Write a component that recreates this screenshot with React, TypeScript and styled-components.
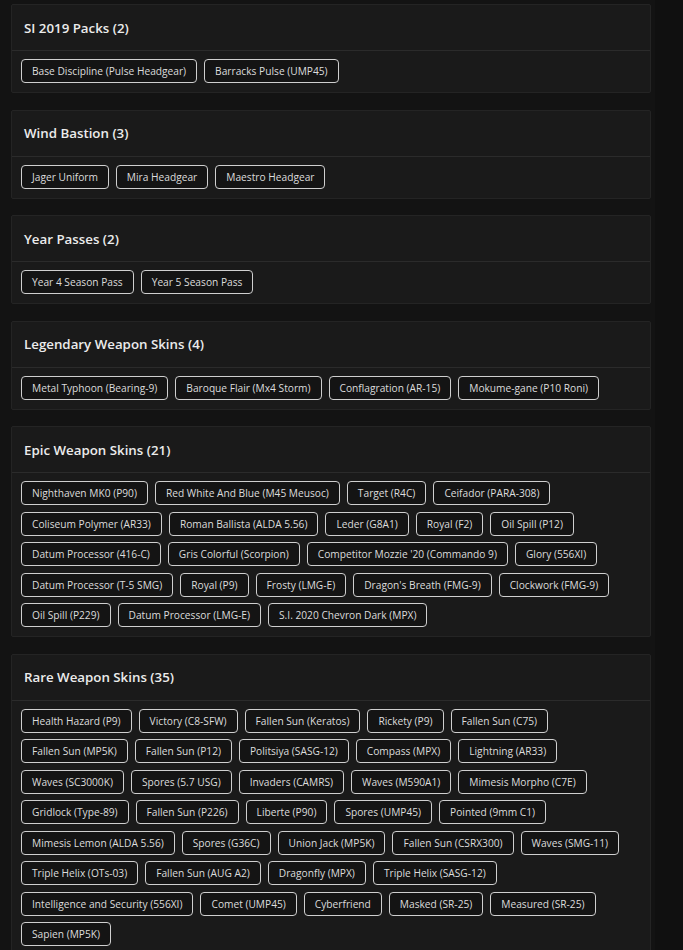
import React from "react";
import styled, { createGlobalStyle } from "styled-components";

const Global = createGlobalStyle`
  html, body { margin: 0; padding: 0; background: #101010; }
  body { font-family: "Open Sans", "DejaVu Sans", sans-serif; color: #e6e6e6; }
`;

const Page = styled.div`
  width: 655px;
  min-height: 950px;
  background: #131313;
  padding: 4px 4px 20px 11px;
  box-sizing: border-box;
  display: flex;
  flex-direction: column;
  gap: 16.5px;
`;

const Card = styled.section`
  width: 640px;
  box-sizing: border-box;
  background: #1a1a1a;
  border: 1px solid #242424;
  border-radius: 2px;
`;

const CardHeader = styled.h2`
  margin: 0;
  height: 45px;
  display: flex;
  align-items: center;
  padding: 0 12px;
  font-size: 13.3px;
  font-weight: 600;
  color: #ececec;
  border-bottom: 1px solid #2b2b2b;
`;

const ChipList = styled.div`
  display: flex;
  flex-wrap: wrap;
  column-gap: 7px;
  row-gap: 6.5px;
  padding: 8px 9px 9px;
`;

const Chip = styled.span`
  display: inline-flex;
  align-items: center;
  height: 24px;
  box-sizing: border-box;
  padding: 0 10px;
  border: 1px solid #cfcfcf;
  border-radius: 4px;
  background: #141414;
  color: #dcdcdc;
  font-size: 10.2px;
  white-space: nowrap;
`;

const groups: { title: string; items: string[] }[] = [
  { title: "SI 2019 Packs", items: ["Base Discipline (Pulse Headgear)", "Barracks Pulse (UMP45)"] },
  { title: "Wind Bastion", items: ["Jager Uniform", "Mira Headgear", "Maestro Headgear"] },
  { title: "Year Passes", items: ["Year 4 Season Pass", "Year 5 Season Pass"] },
  {
    title: "Legendary Weapon Skins",
    items: ["Metal Typhoon (Bearing-9)", "Baroque Flair (Mx4 Storm)", "Conflagration (AR-15)", "Mokume-gane (P10 Roni)"],
  },
  {
    title: "Epic Weapon Skins",
    items: [
      "Nighthaven MK0 (P90)", "Red White And Blue (M45 Meusoc)", "Target (R4C)", "Ceifador (PARA-308)",
      "Coliseum Polymer (AR33)", "Roman Ballista (ALDA 5.56)", "Leder (G8A1)", "Royal (F2)", "Oil Spill (P12)",
      "Datum Processor (416-C)", "Gris Colorful (Scorpion)", "Competitor Mozzie '20 (Commando 9)", "Glory (556XI)",
      "Datum Processor (T-5 SMG)", "Royal (P9)", "Frosty (LMG-E)", "Dragon's Breath (FMG-9)", "Clockwork (FMG-9)",
      "Oil Spill (P229)", "Datum Processor (LMG-E)", "S.I. 2020 Chevron Dark (MPX)",
    ],
  },
  {
    title: "Rare Weapon Skins",
    items: [
      "Health Hazard (P9)", "Victory (C8-SFW)", "Fallen Sun (Keratos)", "Rickety (P9)", "Fallen Sun (C75)",
      "Fallen Sun (MP5K)", "Fallen Sun (P12)", "Politsiya (SASG-12)", "Compass (MPX)", "Lightning (AR33)",
      "Waves (SC3000K)", "Spores (5.7 USG)", "Invaders (CAMRS)", "Waves (M590A1)", "Mimesis Morpho (C7E)",
      "Gridlock (Type-89)", "Fallen Sun (P226)", "Liberte (P90)", "Spores (UMP45)", "Pointed (9mm C1)",
      "Mimesis Lemon (ALDA 5.56)", "Spores (G36C)", "Union Jack (MP5K)", "Fallen Sun (CSRX300)", "Waves (SMG-11)",
      "Triple Helix (OTs-03)", "Fallen Sun (AUG A2)", "Dragonfly (MPX)", "Triple Helix (SASG-12)",
      "Intelligence and Security (556XI)", "Comet (UMP45)", "Cyberfriend", "Masked (SR-25)", "Measured (SR-25)",
      "Sapien (MP5K)",
    ],
  },
];

export default function App() {
  return (
    <>
      <Global />
      <Page>
        {groups.map((g) => (
          <Card key={g.title}>
            <CardHeader>
              {g.title} ({g.items.length})
            </CardHeader>
            <ChipList>
              {g.items.map((it) => (
                <Chip key={it}>{it}</Chip>
              ))}
            </ChipList>
          </Card>
        ))}
      </Page>
    </>
  );
}
